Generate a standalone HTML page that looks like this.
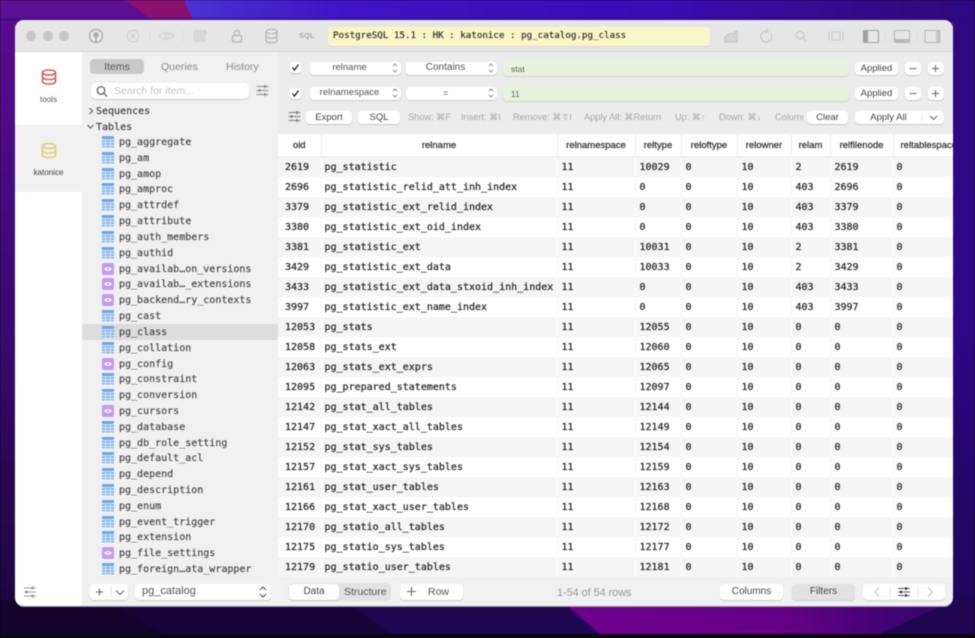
<!DOCTYPE html>
<html><head><meta charset="utf-8"><style>
*{box-sizing:border-box}
html,body{margin:0;padding:0;width:975px;height:638px;overflow:hidden;background:#000}
#p{position:absolute;left:0;top:0;width:975px;height:638px;overflow:hidden;filter:blur(.4px);font-family:"Liberation Sans",sans-serif;color:#333}
.a{position:absolute}
.t{position:absolute;white-space:nowrap;font-size:9px;line-height:12px}
.m{font-family:"DejaVu Sans Mono","Liberation Mono",monospace;font-size:10px;color:#333;-webkit-text-stroke:.2px}
.b{position:absolute;background:#fff;border-radius:4px;box-shadow:0 1px 1px rgba(0,0,0,.16);font-size:9px;text-align:center;color:#444;white-space:nowrap}
.i{position:absolute;left:119px;font-family:"DejaVu Sans Mono",monospace;font-size:10px;line-height:14px;color:#444;white-space:nowrap;-webkit-text-stroke:.15px}
.ic{position:absolute;left:102px;width:12px;height:12px}
svg{position:absolute;overflow:visible}
table{position:absolute;left:278px;top:134px;width:675px;border-collapse:collapse;table-layout:fixed;background:#fff}
th{height:23px;font-size:9.500px;font-weight:normal;color:#333;-webkit-text-stroke:.25px;text-align:center;padding:0;border-right:1px solid #eee;border-bottom:2px solid #eee;white-space:nowrap;overflow:hidden}
th:last-child{text-align:left;padding-left:7px;border-right:0}
td{height:20px;padding:0 0 0 4px;font-family:"DejaVu Sans Mono",monospace;font-size:10px;color:#2a2a2a;-webkit-text-stroke:.25px;border-right:1px solid #f4f4f4;white-space:nowrap;overflow:hidden}
td:first-child{padding-left:7px}
td:nth-child(2){padding-left:3px}
td:last-child{padding-left:3px;border-right:0}
tr:nth-child(even) td{background:#f5f5f5;border-right-color:#fff}
.h{position:absolute;top:111px;font-size:9.200px;line-height:12px;color:#a6a6a6;white-space:nowrap}
</style></head><body><div id="p">
<svg width="975" height="638" style="left:0;top:0">
<defs>
<linearGradient id="g1" x1="0" y1="0" x2="1" y2="0"><stop offset="0" stop-color="#4a32d2"/><stop offset=".2" stop-color="#3d14c4"/><stop offset=".6" stop-color="#3a0cb4"/><stop offset=".8" stop-color="#3a0a90"/><stop offset="1" stop-color="#2e0878"/></linearGradient>
<linearGradient id="g2" x1="0" y1="0" x2="0" y2="1"><stop offset="0" stop-color="#5a0c90"/><stop offset=".5" stop-color="#3a0a70"/><stop offset="1" stop-color="#1a0538"/></linearGradient>
<linearGradient id="g3" x1="0" y1="0" x2="0" y2="1"><stop offset="0" stop-color="#2e0880"/><stop offset=".5" stop-color="#2c0888"/><stop offset="1" stop-color="#1c0650"/></linearGradient>
<linearGradient id="g4" x1="0" y1="0" x2="1" y2="0"><stop offset="0" stop-color="#700090"/><stop offset=".55" stop-color="#660088"/><stop offset="1" stop-color="#2e0668"/></linearGradient>
</defs>
<rect width="975" height="638" fill="url(#g2)"/>
<rect x="185" width="790" height="22" fill="url(#g1)"/>
<rect x="953" width="22" height="638" fill="url(#g3)"/>
<polygon points="0,0 125,0 155,22 0,22" fill="#5e0f90"/>
<polygon points="125,0 184,0 194,22 155,22" fill="#8a1070"/>
<rect y="18" width="975" height="3" fill="#2a0a80" opacity=".55"/>
<rect y="600" width="975" height="34" fill="#12042c"/>
<polygon points="100,600 345,600 390,634 165,634" fill="#170438"/>
<polygon points="345,600 560,600 600,634 390,634" fill="#1e0550"/>
<polygon points="560,600 955,600 880,634 600,634" fill="url(#g4)"/>
<polygon points="955,600 975,600 975,634 880,634" fill="#200650"/>
<rect y="634" width="975" height="4" fill="#0a0a0a"/>
</svg>

<!-- window -->
<div class="a" style="left:15px;top:20px;width:938px;height:586px;border-radius:9px;background:#f0f0f0;overflow:hidden;box-shadow:0 1px 0 #8c8c9c">
 <div class="a" style="left:0;top:0;width:938px;height:32px;background:#e6e6e6;border-bottom:1px solid #d8d8d8"></div>
 <div class="a" style="left:0;top:32px;width:67px;height:554px;background:#fff"></div>
 <div class="a" style="left:0;top:105px;width:67px;height:67px;background:#f0f0f0"></div>
 <div class="a" style="left:67px;top:32px;width:196px;height:554px;background:#f0f0f0"></div>
 <div class="a" style="left:263px;top:32px;width:675px;height:82px;background:#ececec"></div>
 <div class="a" style="left:67px;top:304px;width:196px;height:16px;background:#dcdcdc"></div>
</div>

<!-- traffic lights -->
<div class="a" style="left:26px;top:31px;width:10px;height:10px;border-radius:50%;background:#c6c6c6"></div>
<div class="a" style="left:43px;top:31px;width:10px;height:10px;border-radius:50%;background:#c6c6c6"></div>
<div class="a" style="left:59px;top:31px;width:10px;height:10px;border-radius:50%;background:#c6c6c6"></div>

<!-- toolbar icons -->
<svg width="975" height="60" style="left:0;top:0" fill="none">
 <g stroke="#a8a8a8" stroke-width="1.300">
  <circle cx="96" cy="36" r="6.500"/><path d="M96 42v-6"/><circle cx="96" cy="35" r="2.600" fill="#a8a8a8" stroke="none"/>
 </g>
 <g stroke="#d0d0d0" stroke-width="1.100">
  <circle cx="133" cy="36" r="5.800"/><path d="M130.800 33.800l4.400 4.400M135.200 33.800l-4.400 4.400"/>
  <path d="M159 36q7-7 15 0q-8 7-15 0z"/><circle cx="166.500" cy="36" r="2"/>
  <path d="M150 30v12M183 30v12" stroke="#dedede"/>
 </g>
 <rect x="193" y="30" width="13" height="12" fill="#d8d8d8"/>
 <path d="M204 32h3M205.500 30v4" stroke="#ccc"/>
 <g stroke="#b4b4b4" stroke-width="1.200">
  <rect x="232.500" y="35.500" width="9" height="6.500" rx="1.200"/><path d="M234.500 35.500v-2.500a2.500 2.500 0 0 1 5 0v2.500"/>
  <ellipse cx="271.500" cy="31.500" rx="5.500" ry="2.300"/><path d="M266 31.500v9c0 3 11 3 11 0v-9M266 36c0 3 11 3 11 0"/>
 </g>
 <g stroke="#c6c6c6" stroke-width="1.100">
  <path d="M725 42h12V31l-4 3-3-1-5 4z" fill="#d4d4d4"/>
  <path d="M770.500 33a5.500 5.500 0 1 1-4.500-2M766 28.500l2 2.500-2.500 1.500"/>
  <circle cx="800" cy="35" r="3.800"/><path d="M803 38l3 3"/>
  <path d="M829 31.500v9M843 31.500v9"/><rect x="832" y="32" width="8" height="8" rx="1"/>
 </g>
 <g stroke="#a0a0a0" stroke-width="1.100">
  <rect x="863.500" y="30.500" width="15" height="12" rx="1"/><rect x="864" y="31" width="4" height="11" fill="#a0a0a0" stroke="none"/>
 </g>
 <g stroke="#b8b8b8" stroke-width="1.100">
  <rect x="894.500" y="30.500" width="15" height="12" rx="1"/><rect x="895" y="39" width="14" height="3" fill="#b8b8b8" stroke="none"/>
  <rect x="925" y="30.500" width="15" height="12" rx="1"/><rect x="936" y="31" width="4" height="11" fill="#c4c4c4" stroke="none"/>
  <path d="M885.500 31v11M917 31v11" stroke="#dcdcdc"/>
 </g>
</svg>
<div class="t" style="left:299px;top:30px;font-size:7.500px;font-weight:bold;color:#aaa">SQL</div>
<div class="a" style="left:328px;top:27px;width:382px;height:19px;background:#faf7c6;border-radius:3px;box-shadow:0 1px 1px rgba(0,0,0,.08)"></div>
<div class="t m" style="left:333px;top:30px;font-size:9.200px;color:#333">PostgreSQL 15.1 : HK : katonice : pg_catalog.pg_class</div>

<!-- left rail -->
<svg width="80" height="180" style="left:0;top:0" fill="none">
 <g stroke="#c8584f" stroke-width="1.500"><ellipse cx="49" cy="72.500" rx="6.500" ry="2.500"/><path d="M42.500 72.500v9c0 3.400 13 3.400 13 0v-9M42.500 77c0 3.400 13 3.400 13 0"/></g>
 <g stroke="#e0cf6a" stroke-width="1.500"><ellipse cx="49" cy="146" rx="6.500" ry="2.500"/><path d="M42.500 146v9c0 3.400 13 3.400 13 0v-9M42.500 150.500c0 3.400 13 3.400 13 0"/></g>
</svg>
<div class="t" style="left:15px;width:67px;text-align:center;top:94px;font-size:8px;color:#555">tools</div>
<div class="t" style="left:15px;width:67px;text-align:center;top:167px;font-size:8px;color:#444">katonice</div>
<svg width="30" height="20" style="left:15px;top:584px" fill="none" stroke="#999" stroke-width="1.100"><path d="M9 4h12M9 8h12M9 12h12"/><path d="M17.500 2.500v3M11.500 6.500v3M17.500 10.500v3" stroke-width="1.800"/></svg>

<!-- tabs -->
<div class="a" style="left:90px;top:59px;width:54px;height:15px;background:#c9c9c9;border-radius:4px"></div>
<div class="t" style="left:90px;width:54px;text-align:center;top:61px;font-size:10.500px;color:#555">Items</div>
<div class="t" style="left:161px;top:61px;font-size:10.500px;color:#8a8a8a">Queries</div>
<div class="t" style="left:226px;top:61px;font-size:10.500px;color:#8a8a8a">History</div>
<div class="b" style="left:91px;top:83px;width:158px;height:16px;border-radius:5px"></div>
<svg width="14" height="14" style="left:95px;top:84px" fill="none" stroke="#555" stroke-width="1.200"><circle cx="6" cy="6.500" r="3.800"/><path d="M9 9.500l3 3"/></svg>
<div class="t" style="left:114px;top:85px;font-size:10.500px;color:#c4c4c4">Search for item...</div>
<svg width="16" height="14" style="left:256px;top:84px" fill="none" stroke="#8a8a8a" stroke-width="1"><path d="M.5 2.500h12M.5 6.500h12M.5 10.500h12"/><path d="M9 1v3M3.500 5v3M9 9v3" stroke-width="1.600"/></svg>

<svg width="20" height="40" style="left:84px;top:104px" fill="none" stroke="#666" stroke-width="1.200"><path d="M5.500 4l3 3-3 3M3.500 21l3 3 3-3"/></svg>
<div class="t m" style="left:96px;top:105px;line-height:14px;color:#444">Sequences</div>
<div class="t m" style="left:96px;top:121px;line-height:14px;color:#444">Tables</div>

<svg width="0" height="0"><defs>
<g id="tb"><rect width="12" height="11.500" rx="1" fill="#d4e4f8"/><rect width="12" height="3" fill="#6ba6ee"/><path d="M0 4h3v2H0zM4 4h4v2H4zM9 4h3v2H9zM0 7h3v2H0zM4 7h4v2H4zM9 7h3v2H9zM0 10h3v1.500H0zM4 10h4v1.500H4zM9 10h3v1.500H9z" fill="#86b6f0"/></g>
<g id="vw"><rect width="12" height="12" rx="2" fill="#c39af0"/><path d="M2 6q4-4 8 0q-4 4-8 0z" fill="#fff"/><circle cx="6" cy="6" r="1.200" fill="#c39af0"/></g>
</defs></svg>

<svg class="ic" style="top:136px"><use href="#tb"/></svg><div class="i" style="top:136px">pg_aggregate</div>
<svg class="ic" style="top:152px"><use href="#tb"/></svg><div class="i" style="top:152px">pg_am</div>
<svg class="ic" style="top:168px"><use href="#tb"/></svg><div class="i" style="top:168px">pg_amop</div>
<svg class="ic" style="top:183px"><use href="#tb"/></svg><div class="i" style="top:183px">pg_amproc</div>
<svg class="ic" style="top:199px"><use href="#tb"/></svg><div class="i" style="top:199px">pg_attrdef</div>
<svg class="ic" style="top:215px"><use href="#tb"/></svg><div class="i" style="top:215px">pg_attribute</div>
<svg class="ic" style="top:231px"><use href="#tb"/></svg><div class="i" style="top:231px">pg_auth_members</div>
<svg class="ic" style="top:247px"><use href="#tb"/></svg><div class="i" style="top:247px">pg_authid</div>
<svg class="ic" style="top:263px"><use href="#vw"/></svg><div class="i" style="top:263px">pg_availab…on_versions</div>
<svg class="ic" style="top:278px"><use href="#vw"/></svg><div class="i" style="top:278px">pg_availab…_extensions</div>
<svg class="ic" style="top:294px"><use href="#vw"/></svg><div class="i" style="top:294px">pg_backend…ry_contexts</div>
<svg class="ic" style="top:310px"><use href="#tb"/></svg><div class="i" style="top:310px">pg_cast</div>
<svg class="ic" style="top:326px"><use href="#tb"/></svg><div class="i" style="top:326px">pg_class</div>
<svg class="ic" style="top:342px"><use href="#tb"/></svg><div class="i" style="top:342px">pg_collation</div>
<svg class="ic" style="top:358px"><use href="#vw"/></svg><div class="i" style="top:358px">pg_config</div>
<svg class="ic" style="top:373px"><use href="#tb"/></svg><div class="i" style="top:373px">pg_constraint</div>
<svg class="ic" style="top:389px"><use href="#tb"/></svg><div class="i" style="top:389px">pg_conversion</div>
<svg class="ic" style="top:405px"><use href="#vw"/></svg><div class="i" style="top:405px">pg_cursors</div>
<svg class="ic" style="top:421px"><use href="#tb"/></svg><div class="i" style="top:421px">pg_database</div>
<svg class="ic" style="top:437px"><use href="#tb"/></svg><div class="i" style="top:437px">pg_db_role_setting</div>
<svg class="ic" style="top:452px"><use href="#tb"/></svg><div class="i" style="top:452px">pg_default_acl</div>
<svg class="ic" style="top:468px"><use href="#tb"/></svg><div class="i" style="top:468px">pg_depend</div>
<svg class="ic" style="top:484px"><use href="#tb"/></svg><div class="i" style="top:484px">pg_description</div>
<svg class="ic" style="top:500px"><use href="#tb"/></svg><div class="i" style="top:500px">pg_enum</div>
<svg class="ic" style="top:516px"><use href="#tb"/></svg><div class="i" style="top:516px">pg_event_trigger</div>
<svg class="ic" style="top:531px"><use href="#tb"/></svg><div class="i" style="top:531px">pg_extension</div>
<svg class="ic" style="top:547px"><use href="#vw"/></svg><div class="i" style="top:547px">pg_file_settings</div>
<svg class="ic" style="top:563px"><use href="#tb"/></svg><div class="i" style="top:563px">pg_foreign…ata_wrapper</div>

<!-- filters -->
<div class="b" style="left:290px;top:62px;width:11px;height:11px;border-radius:3px"></div>
<div class="b" style="left:290px;top:88px;width:11px;height:11px;border-radius:3px"></div>
<svg width="20" height="50" style="left:290px;top:60px" fill="none" stroke="#222" stroke-width="1.300"><path d="M2.500 7.500l2 2.500 4-5.500M2.500 33.500l2 2.500 4-5.500"/></svg>

<div class="b" style="left:310px;top:62px;width:91px;height:13px;line-height:12px;padding-right:12px;color:#555;font-size:9.500px">relname</div>
<div class="b" style="left:310px;top:87px;width:91px;height:13px;line-height:12px;padding-right:12px;color:#555;font-size:9.500px">relnamespace</div>
<div class="b" style="left:406px;top:62px;width:91px;height:13px;line-height:12px;padding-right:12px;font-size:10px;color:#555">Contains</div>
<div class="b" style="left:406px;top:87px;width:91px;height:13px;line-height:12px;padding-right:12px;color:#555">=</div>
<svg width="200" height="50" style="left:385px;top:60px" fill="none" stroke="#888" stroke-width=".9"><path d="M8 6l2-2 2 2M8 10l2 2 2-2M104 6l2-2 2 2M104 10l2 2 2-2M8 31l2-2 2 2M8 35l2 2 2-2M104 31l2-2 2 2M104 35l2 2 2-2"/></svg>
<div class="a" style="left:503px;top:60px;width:346px;height:16px;background:#e9f2dc;border-radius:4px;box-shadow:0 1px 1px rgba(120,140,90,.25)"></div>
<div class="a" style="left:503px;top:85px;width:346px;height:16px;background:#e9f2dc;border-radius:4px;box-shadow:0 1px 1px rgba(120,140,90,.25)"></div>
<div class="t" style="left:511px;top:63px;font-size:8.500px;color:#666">stat</div>
<div class="t" style="left:511px;top:88px;font-size:8.500px;color:#666">11</div>
<div class="b" style="left:855px;top:62px;width:43px;height:13px;line-height:14px;font-size:9.500px">Applied</div>
<div class="b" style="left:855px;top:87px;width:43px;height:13px;line-height:14px;font-size:9.500px">Applied</div>
<div class="b" style="left:905px;top:62px;width:16px;height:13px"></div>
<div class="b" style="left:928px;top:62px;width:16px;height:13px"></div>
<div class="b" style="left:905px;top:87px;width:16px;height:13px"></div>
<div class="b" style="left:928px;top:87px;width:16px;height:13px"></div>
<svg width="50" height="50" style="left:905px;top:60px" fill="none" stroke="#666" stroke-width="1"><path d="M4.500 8.500h7M27 8.500h7M30.500 5v7M4.500 33.500h7M27 33.500h7M30.500 30v7"/></svg>

<svg width="16" height="14" style="left:288px;top:110px" fill="none" stroke="#808080" stroke-width="1"><path d="M.5 2.500h12M.5 6.500h12M.5 10.500h12"/><path d="M9 1v3M3.500 5v3M9 9v3" stroke-width="1.600"/></svg>
<div class="b" style="left:306px;top:111px;width:46px;height:13px;line-height:13px;font-size:9.500px">Export</div>
<div class="b" style="left:358px;top:111px;width:42px;height:13px;line-height:13px;font-size:9.500px">SQL</div>
<div class="h" style="left:408px">Show: ⌘F</div>
<div class="h" style="left:461px">Insert: ⌘I</div>
<div class="h" style="left:513px">Remove: ⌘⇧I</div>
<div class="h" style="left:584px">Apply All: ⌘Return</div>
<div class="h" style="left:675px">Up: ⌘↑</div>
<div class="h" style="left:719px">Down: ⌘↓</div>
<div class="h" style="left:775px;width:28px;overflow:hidden">Columns</div>
<div class="b" style="left:807px;top:111px;width:41px;height:13px;line-height:13px;font-size:9.500px">Clear</div>
<div class="b" style="left:855px;top:111px;width:89px;height:13px;line-height:13px;font-size:9.500px;padding-right:22px">Apply All</div>
<svg width="20" height="13" style="left:922px;top:111px" fill="none" stroke="#666" stroke-width="1"><path d="M.5 3v7" stroke="#e4e4e4"/><path d="M8 5l3.500 3.500L15 5"/></svg>

<!-- table -->
<table>
<colgroup><col style="width:43px"><col style="width:236px"><col style="width:78px"><col style="width:46px"><col style="width:56px"><col style="width:54px"><col style="width:39px"><col style="width:63px"><col style="width:60px"></colgroup>
<tr><th>oid</th><th>relname</th><th>relnamespace</th><th>reltype</th><th>reloftype</th><th>relowner</th><th>relam</th><th>relfilenode</th><th>reltablespace</th></tr>
<tr><td>2619</td><td>pg_statistic</td><td>11</td><td>10029</td><td>0</td><td>10</td><td>2</td><td>2619</td><td>0</td></tr>
<tr><td>2696</td><td>pg_statistic_relid_att_inh_index</td><td>11</td><td>0</td><td>0</td><td>10</td><td>403</td><td>2696</td><td>0</td></tr>
<tr><td>3379</td><td>pg_statistic_ext_relid_index</td><td>11</td><td>0</td><td>0</td><td>10</td><td>403</td><td>3379</td><td>0</td></tr>
<tr><td>3380</td><td>pg_statistic_ext_oid_index</td><td>11</td><td>0</td><td>0</td><td>10</td><td>403</td><td>3380</td><td>0</td></tr>
<tr><td>3381</td><td>pg_statistic_ext</td><td>11</td><td>10031</td><td>0</td><td>10</td><td>2</td><td>3381</td><td>0</td></tr>
<tr><td>3429</td><td>pg_statistic_ext_data</td><td>11</td><td>10033</td><td>0</td><td>10</td><td>2</td><td>3429</td><td>0</td></tr>
<tr><td>3433</td><td>pg_statistic_ext_data_stxoid_inh_index</td><td>11</td><td>0</td><td>0</td><td>10</td><td>403</td><td>3433</td><td>0</td></tr>
<tr><td>3997</td><td>pg_statistic_ext_name_index</td><td>11</td><td>0</td><td>0</td><td>10</td><td>403</td><td>3997</td><td>0</td></tr>
<tr><td>12053</td><td>pg_stats</td><td>11</td><td>12055</td><td>0</td><td>10</td><td>0</td><td>0</td><td>0</td></tr>
<tr><td>12058</td><td>pg_stats_ext</td><td>11</td><td>12060</td><td>0</td><td>10</td><td>0</td><td>0</td><td>0</td></tr>
<tr><td>12063</td><td>pg_stats_ext_exprs</td><td>11</td><td>12065</td><td>0</td><td>10</td><td>0</td><td>0</td><td>0</td></tr>
<tr><td>12095</td><td>pg_prepared_statements</td><td>11</td><td>12097</td><td>0</td><td>10</td><td>0</td><td>0</td><td>0</td></tr>
<tr><td>12142</td><td>pg_stat_all_tables</td><td>11</td><td>12144</td><td>0</td><td>10</td><td>0</td><td>0</td><td>0</td></tr>
<tr><td>12147</td><td>pg_stat_xact_all_tables</td><td>11</td><td>12149</td><td>0</td><td>10</td><td>0</td><td>0</td><td>0</td></tr>
<tr><td>12152</td><td>pg_stat_sys_tables</td><td>11</td><td>12154</td><td>0</td><td>10</td><td>0</td><td>0</td><td>0</td></tr>
<tr><td>12157</td><td>pg_stat_xact_sys_tables</td><td>11</td><td>12159</td><td>0</td><td>10</td><td>0</td><td>0</td><td>0</td></tr>
<tr><td>12161</td><td>pg_stat_user_tables</td><td>11</td><td>12163</td><td>0</td><td>10</td><td>0</td><td>0</td><td>0</td></tr>
<tr><td>12166</td><td>pg_stat_xact_user_tables</td><td>11</td><td>12168</td><td>0</td><td>10</td><td>0</td><td>0</td><td>0</td></tr>
<tr><td>12170</td><td>pg_statio_all_tables</td><td>11</td><td>12172</td><td>0</td><td>10</td><td>0</td><td>0</td><td>0</td></tr>
<tr><td>12175</td><td>pg_statio_sys_tables</td><td>11</td><td>12177</td><td>0</td><td>10</td><td>0</td><td>0</td><td>0</td></tr>
<tr><td>12179</td><td>pg_statio_user_tables</td><td>11</td><td>12181</td><td>0</td><td>10</td><td>0</td><td>0</td><td>0</td></tr>
</table>

<!-- bottom bar -->
<div class="b" style="left:90px;top:584px;width:38px;height:16px"></div>
<svg width="40" height="16" style="left:90px;top:584px" fill="none" stroke="#666" stroke-width="1.100"><path d="M6 8h7M9.500 4.500v7"/><path d="M21 3v10" stroke="#e4e4e4"/><path d="M26 6.500l4 4 4-4"/></svg>
<div class="b" style="left:135px;top:584px;width:136px;height:16px;line-height:15px;text-align:left;padding-left:7px;font-size:11px;color:#555">pg_catalog</div>
<svg width="10" height="14" style="left:258px;top:585px" fill="none" stroke="#555" stroke-width="1.100"><path d="M2 5l3-3 3 3M2 9l3 3 3-3"/></svg>

<div class="a" style="left:288px;top:583px;width:103px;height:18px;background:#e2e2e2;border-radius:5px"></div>
<div class="b" style="left:289px;top:584px;width:50px;height:16px;line-height:16px;font-size:10px">Data</div>
<div class="t" style="left:344px;top:586px;font-size:10.500px;color:#555">Structure</div>
<div class="b" style="left:400px;top:584px;width:63px;height:16px"></div>
<svg width="12" height="12" style="left:406px;top:586px" fill="none" stroke="#666" stroke-width="1.100"><path d="M1 5.500h9M5.500 1v9"/></svg>
<div class="t" style="left:428px;top:586px;font-size:10.500px;color:#555">Row</div>
<div class="t" style="left:557px;top:587px;font-size:10.800px;color:#999">1-54 of 54 rows</div>
<div class="b" style="left:720px;top:584px;width:63px;height:16px;line-height:16px;font-size:10px">Columns</div>
<div class="b" style="left:792px;top:584px;width:63px;height:16px;line-height:16px;font-size:10px;background:#e2e2e2">Filters</div>
<div class="b" style="left:863px;top:584px;width:82px;height:16px"></div>
<svg width="82" height="16" style="left:863px;top:584px" fill="none" stroke="#c4c4c4" stroke-width="1.100"><path d="M16 3.500l-4.500 4.500 4.500 4.500M65 3.500l4.500 4.500-4.500 4.500"/><path d="M27 3v10M55 3v10" stroke="#ececec"/><path d="M35 4.500h12M35 8h12M35 11.500h12" stroke="#555"/><path d="M43 3v3M38 6.500v3M43 10v3" stroke="#333" stroke-width="1.600"/></svg>
</div></body></html>
